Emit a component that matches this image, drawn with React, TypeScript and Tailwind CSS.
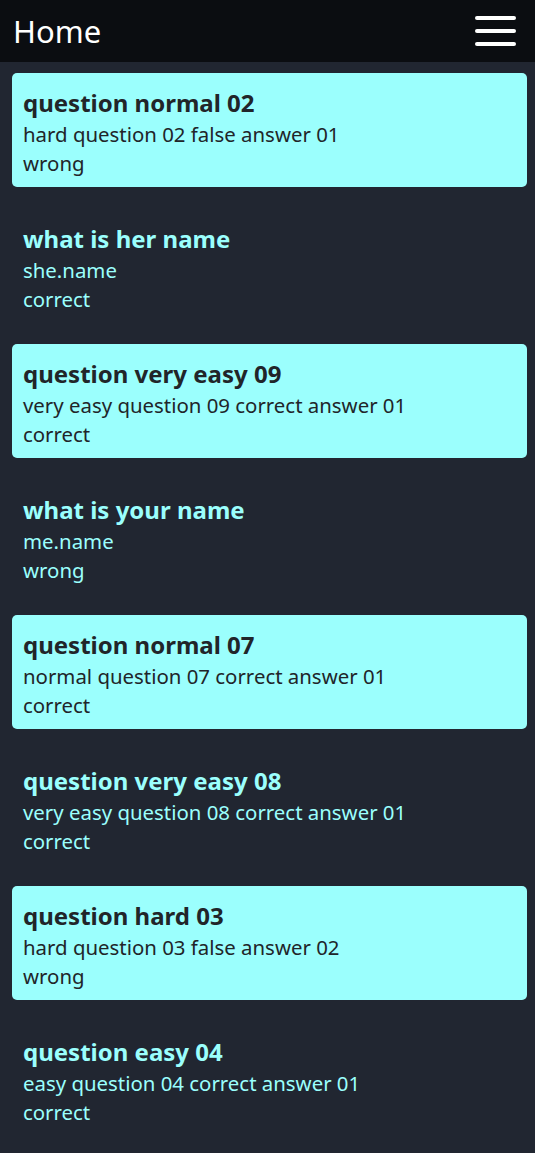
import React from 'react';

type Item = { title: string; answer: string; result: string };

const items: Item[] = [
  { title: 'question normal 02', answer: 'hard question 02 false answer 01', result: 'wrong' },
  { title: 'what is her name', answer: 'she.name', result: 'correct' },
  { title: 'question very easy 09', answer: 'very easy question 09 correct answer 01', result: 'correct' },
  { title: 'what is your name', answer: 'me.name', result: 'wrong' },
  { title: 'question normal 07', answer: 'normal question 07 correct answer 01', result: 'correct' },
  { title: 'question very easy 08', answer: 'very easy question 08 correct answer 01', result: 'correct' },
  { title: 'question hard 03', answer: 'hard question 03 false answer 02', result: 'wrong' },
  { title: 'question easy 04', answer: 'easy question 04 correct answer 01', result: 'correct' },
];

export default function App() {
  return (
    <div className="min-h-[1153px] bg-[#212631] font-['Noto_Sans',sans-serif]">
      {/* top bar */}
      <header className="flex h-[62px] items-center justify-between bg-[#0b0d11] pl-[13px] pr-[19px]">
        <h1 className="text-[31px] leading-none text-white">Home</h1>
        <button className="flex flex-col gap-[9px]" aria-label="menu">
          <span className="block h-[4px] w-[41px] rounded-full bg-white" />
          <span className="block h-[4px] w-[41px] rounded-full bg-white" />
          <span className="block h-[4px] w-[41px] rounded-full bg-white" />
        </button>
      </header>

      <main className="flex flex-col gap-[22px] pl-[12px] pr-[8px] pt-[11px]">
        {items.map((item, i) => (
          <div
            key={i}
            className={`rounded-[5px] pl-[11px] pr-3 pt-[15px] pb-[8.5px] ${
              i % 2 === 0 ? 'bg-[#9bfffd] text-[#212529]' : 'text-[#9bfffd]'
            }`}
          >
            <h5 className="text-[24px] font-bold leading-[30px]">{item.title}</h5>
            <div className="mt-[2px]">
              <p className="text-[20.4px] leading-[29px]">{item.answer}</p>
              <p className="text-[20.4px] leading-[29px]">{item.result}</p>
            </div>
          </div>
        ))}
      </main>
    </div>
  );
}
